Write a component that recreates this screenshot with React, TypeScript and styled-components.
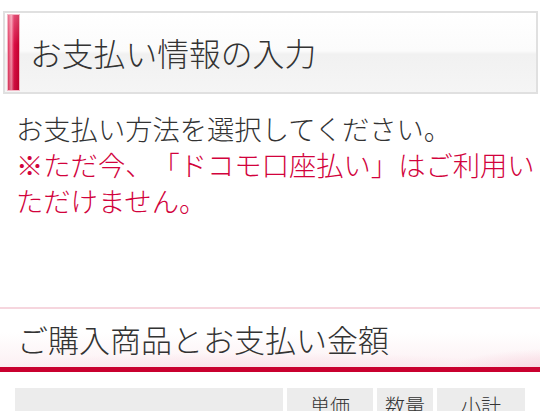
import React from "react";
import styled, { createGlobalStyle } from "styled-components";

const GlobalStyle = createGlobalStyle`
  html, body {
    margin: 0;
    padding: 0;
    background: #fff;
  }
  body {
    font-family: "Noto Sans CJK JP", "Noto Sans", sans-serif;
    color: #333;
    text-spacing-trim: space-all;
  }
`;

const Page = styled.div`
  width: 540px;
  overflow: hidden;
`;

const TitleBox = styled.div`
  margin: 11px 2px 0 3px;
  height: 79px;
  border: 2px solid #e0e0e0;
  display: flex;
  align-items: center;
  gap: 10px;
  padding: 0 0 0 2px;
  background: linear-gradient(180deg, #ffffff 0%, #fbfbfb 48%, #f1f1f1 52%, #f5f5f5 100%);
`;

const RedMark = styled.div`
  width: 11px;
  height: 75px;
  border: 1px solid #f4b8c6;
  background:
    linear-gradient(180deg, rgba(255, 255, 255, 0.25) 0%, rgba(255, 255, 255, 0) 40%, rgba(120, 0, 20, 0.15) 100%),
    linear-gradient(90deg, #e23a62 0%, #f693ab 30%, #dc1047 55%, #c4002f 100%);
`;

const MainTitle = styled.h1`
  margin: 0;
  font-size: 31.8px;
  font-weight: 300;
  line-height: 1;
  color: #333;
`;

const Notice = styled.div`
  padding: 16px 0 0 16px;
  font-size: 27.3px;
  font-weight: 300;
  line-height: 36px;
  height: 197px;
`;

const NoticeLine = styled.p<{ $alert?: boolean }>`
  margin: 0;
  color: ${(p) => (p.$alert ? "#d2023c" : "#333")};
`;

const SectionHead = styled.div`
  height: 58px;
  border-top: 2px solid #f6d6de;
  border-bottom: 5px solid #c9002f;
  display: flex;
  align-items: center;
  padding: 0 0 0 17px;
  background:
    radial-gradient(ellipse 150px 30px at 560px 62px, rgba(247, 208, 219, 0.95) 0%, rgba(247, 208, 219, 0) 75%),
    radial-gradient(ellipse 340px 22px at 260px 62px, rgba(249, 222, 230, 0.9) 0%, rgba(249, 222, 230, 0) 85%),
    linear-gradient(180deg, #ffffff 0%, #ffffff 40%, #fcf0f3 100%);
`;

const SectionTitle = styled.h2`
  margin: 0;
  font-size: 31px;
  font-weight: 300;
  line-height: 1;
  color: #333;
`;

const Table = styled.div`
  display: grid;
  grid-template-columns: 268px 86px 56px 88px;
  column-gap: 4px;
  margin: 16px 0 0 15px;
`;

const HeadCell = styled.div`
  background: #ececec;
  height: 40px;
  text-align: center;
  font-size: 20px;
  font-weight: 300;
  line-height: 20px;
  padding-top: 8px;
  box-sizing: border-box;
  color: #333;
`;

const columns = ["", "単価", "数量", "小計"];

export default function App() {
  return (
    <Page>
      <GlobalStyle />
      <TitleBox>
        <RedMark />
        <MainTitle>お支払い情報の入力</MainTitle>
      </TitleBox>
      <Notice>
        <NoticeLine>お支払い方法を選択してください。</NoticeLine>
        <NoticeLine $alert>※ただ今、「ドコモ口座払い」はご利用いただけません。</NoticeLine>
      </Notice>
      <SectionHead>
        <SectionTitle>ご購入商品とお支払い金額</SectionTitle>
      </SectionHead>
      <Table>
        {columns.map((c, i) => (
          <HeadCell key={i}>{c}</HeadCell>
        ))}
      </Table>
    </Page>
  );
}
